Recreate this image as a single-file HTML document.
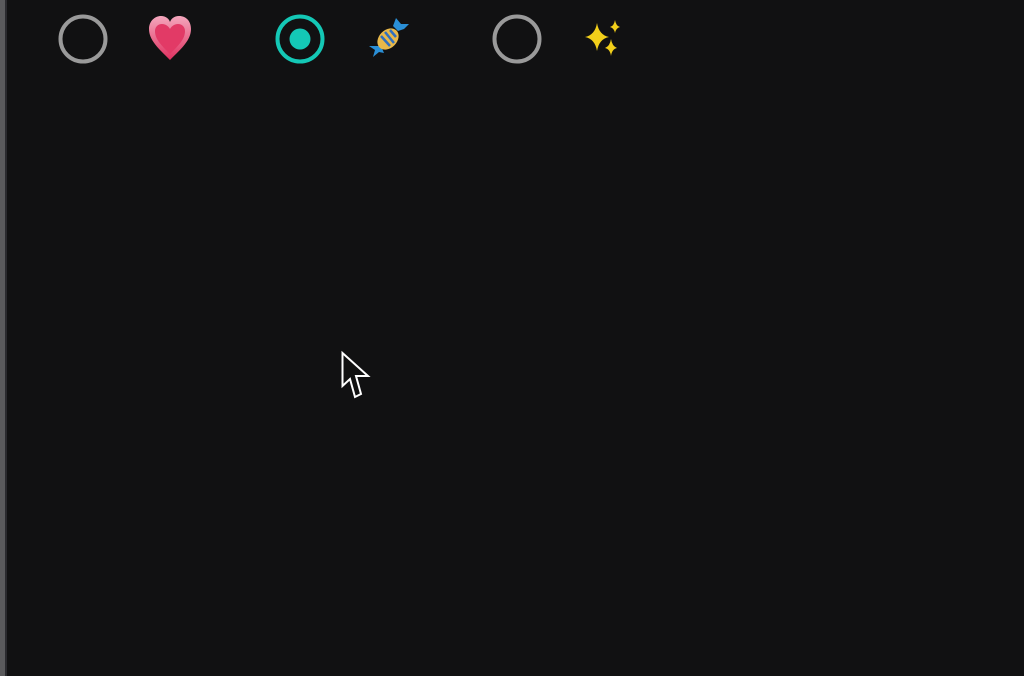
<!DOCTYPE html>
<html><head><meta charset="utf-8"><style>
html,body{margin:0;padding:0;width:1024px;height:676px;overflow:hidden;background:#111112;}
.strip{position:absolute;left:0;top:0;width:5px;height:676px;background:#5a5a5c;}
.strip2{position:absolute;left:5px;top:0;width:2px;height:676px;background:#2a2a2e;}
svg{position:absolute;left:0;top:0;}
</style></head><body>
<div class="strip"></div><div class="strip2"></div>
<svg width="1024" height="676" viewBox="0 0 1024 676">
  <defs>
    <linearGradient id="hg" x1="0" y1="0" x2="0" y2="1">
      <stop offset="0" stop-color="#f4a7bd"/><stop offset="1" stop-color="#e0305f"/>
    </linearGradient>
  </defs>
  <circle cx="83" cy="39" r="22.5" fill="none" stroke="#9a9a9a" stroke-width="4"/>
  <circle cx="300" cy="39" r="22.5" fill="none" stroke="#14c8b6" stroke-width="4"/>
  <circle cx="300" cy="39" r="10.5" fill="#14c8b6"/>
  <circle cx="517" cy="39" r="22.5" fill="none" stroke="#9a9a9a" stroke-width="4"/>
  <!-- heart -->
  <path d="M170 60 C158 48 149 40 149 29 C149 21 155 16 161 16 C166 16 169 19 170 22 C171 19 174 16 179 16 C186 16 191 21 191 29 C191 40 182 48 170 60 Z" fill="url(#hg)"/>
  <path d="M170 54 C161 45 155 39 155 31 C155 27 158 24 162 24 C166 24 169 27 170 29 C171 27 174 24 178 24 C182 24 185 27 185 31 C185 39 179 45 170 54 Z" fill="#e23a66"/>
  <!-- candy -->
  <path d="M369 46 L375 50 L373 57 L379 52 L384 53 L381 46 Z" fill="#2a8fd6"/>
  <path d="M398 31 L393 26 L396 18 L401 24 L409 24 L404 29 Z" fill="#2a8fd6"/>
  <ellipse cx="388" cy="39" rx="9" ry="12" transform="rotate(45 388 39)" fill="#e8b84a"/>
  <path d="M381 36 L390 46 M385 32 L394 43 M390 30 L396 37" stroke="#2f6fc0" stroke-width="2.5"/>
  <!-- sparkles -->
  <path d="M597 23 Q599 35 609 37 Q599 39 597 51 Q595 39 585 37 Q595 35 597 23 Z" fill="#f2cf1a"/>
  <path d="M615 20 Q616 26 620 27 Q616 28 615 33 Q614 28 610 27 Q614 26 615 20 Z" fill="#f2cf1a"/>
  <path d="M611 39 Q612 46 617 48 Q612 49 611 56 Q610 49 605 48 Q610 46 611 39 Z" fill="#f2cf1a"/>
  <!-- cursor -->
  <path d="M342.5 353 L342.5 386 L350 379 L355 397 L361 394 L356 376 L368 376 Z" fill="#111" stroke="#fff" stroke-width="2" stroke-linejoin="miter"/>
</svg>
</body></html>
